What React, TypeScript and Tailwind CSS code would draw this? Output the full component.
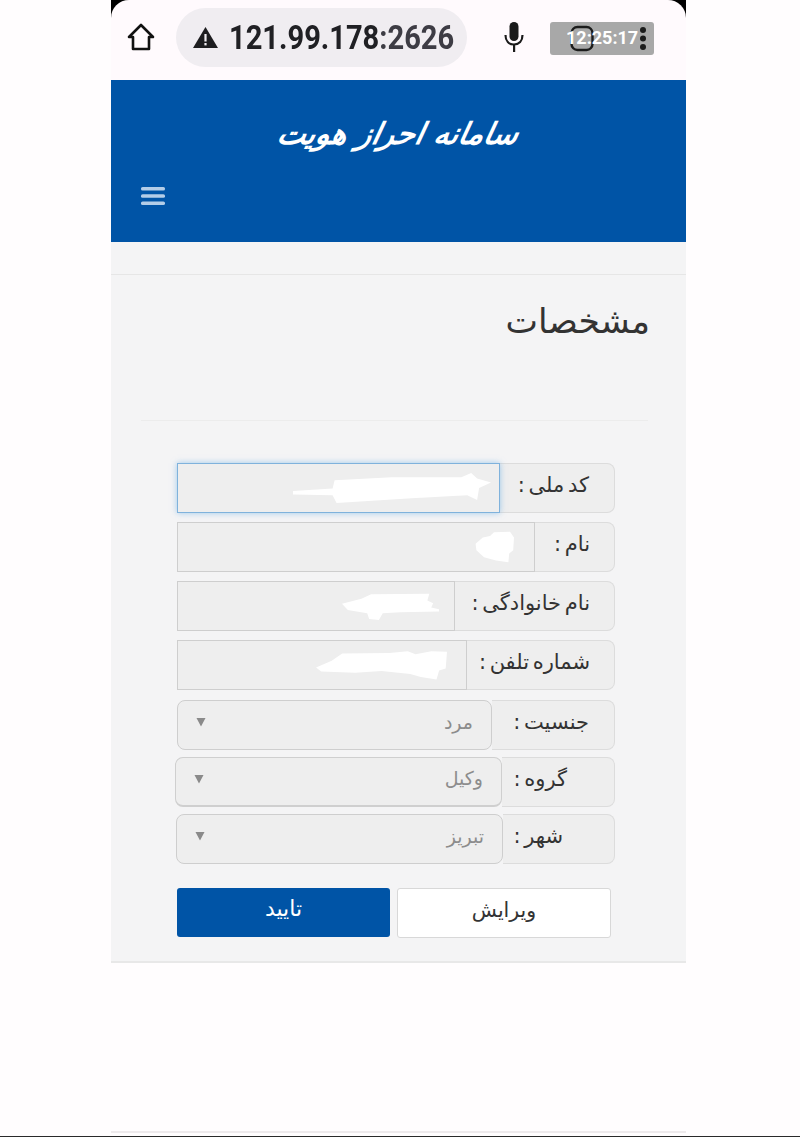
const dejavu = "font-['DejaVu_Sans',sans-serif]";

function Scribble({ d, className }: { d: string; className: string }) {
  return (
    <svg className={`blur-[0.6px] ${className}`} viewBox="0 0 100 100" preserveAspectRatio="none" aria-hidden="true">
      <path d={d} fill="#ffffff" />
    </svg>
  );
}

function Row({
  label,
  labelClass,
  fieldClass,
  outerClass,
  focused,
  children,
}: {
  label: string;
  labelClass: string;
  fieldClass: string;
  outerClass: string;
  focused?: boolean;
  children?: React.ReactNode;
}) {
  return (
    <div className={`flex h-[50px] ${outerClass}`}>
      <div
        className={`relative z-10 flex items-center border ${fieldClass} ${
          focused
            ? "border-[#7fb2dc] shadow-[0_0_6px_rgba(100,170,230,0.6)]"
            : "border-[#cecece]"
        } bg-[#eeeeee]`}
      >
        {children}
      </div>
      <div
        dir="rtl"
        className={`flex items-center rounded-r-[8px] border border-l-0 border-[#dcdcdc] bg-[#eeeeee] pb-[4px] text-[21px] text-[#333333] [word-spacing:-3px] ${dejavu} ${labelClass}`}
      >
        {label}
      </div>
    </div>
  );
}

function SelectInner({ value }: { value: string }) {
  return (
    <div className="flex w-full items-center justify-between pb-[6px]">
      <svg className="h-[10px] w-[10px]" viewBox="0 0 10 10" aria-hidden="true">
        <path d="M0.5 1 H9.5 L5 9.5 Z" fill="#8a8a8a" />
      </svg>
      <span dir="rtl" className={`text-[19px] text-[#8c8c8c] ${dejavu}`}>
        {value}
      </span>
    </div>
  );
}

export default function App() {
  return (
    <div className="flex h-[1137px] w-[800px] flex-col bg-[#fffdfe]">
      <div className="mx-[111px] flex w-[575px] flex-1 flex-col bg-[#fffdfe]">
        <div className="bg-black">
          <header className="flex h-[80px] items-center rounded-t-[18px] bg-[#fffafd] pb-[6px]">
            <svg className="ml-[15px] h-[30px] w-[30px] shrink-0" viewBox="0 0 30 30" fill="none" stroke="#111111" strokeWidth="2.6" strokeLinejoin="round" aria-hidden="true">
              <path d="M15 3 L27 15 H23 V27 H7 V15 H3 Z" />
            </svg>
            <div className="ml-[20px] flex h-[59px] w-[291px] shrink-0 items-center rounded-full bg-[#f0edf1] pl-[16px]">
              <svg className="h-[23px] w-[27px] shrink-0" viewBox="0 0 27 23" aria-hidden="true">
                <path d="M13.5 1 L26 22 H1 Z" fill="#1d1d1f" />
                <rect x="12.4" y="8" width="2.2" height="7.5" fill="#f0edf1" />
                <rect x="12.4" y="17" width="2.2" height="2.4" fill="#f0edf1" />
              </svg>
              <span className="ml-[10px] origin-left scale-x-[0.855] whitespace-nowrap font-['Roboto',sans-serif] text-[34px] font-bold text-[#202024]">
                121.99.178<span className="text-[#3d3c44]">:2626</span>
              </span>
            </div>
            <svg className="ml-[35px] h-[32px] w-[24px] shrink-0" viewBox="0 0 24 32" aria-hidden="true">
              <rect x="7.5" y="1" width="9" height="19" rx="4.5" fill="#1a1a1a" />
              <path d="M3.5 14 C3.5 20 7 23.5 12 23.5 C17 23.5 20.5 20 20.5 14" fill="none" stroke="#1a1a1a" strokeWidth="2.2" />
              <rect x="11" y="23" width="2.2" height="8" fill="#1a1a1a" />
            </svg>
            <div className="relative ml-[24px] mt-[2px] flex h-[33px] w-[104px] shrink-0 items-center rounded-[3px] bg-[#a8a8a8]">
              <svg className="absolute left-[20px] top-[3px] h-[27px] w-[24px]" viewBox="0 0 24 27" fill="none" aria-hidden="true">
                <rect x="1.5" y="2" width="21" height="23" rx="6" stroke="#1c1c1c" strokeWidth="2.4" />
              </svg>
              <span className="relative ml-[16px] font-['Roboto',sans-serif] text-[18px] font-bold leading-none text-white">
                12:25:17
              </span>
              <svg className="absolute left-[89px] top-[4px] h-[26px] w-[8px]" viewBox="0 0 8 26" aria-hidden="true">
                <circle cx="4" cy="4" r="3" fill="#1c1c1c" />
                <circle cx="4" cy="12.5" r="3" fill="#1c1c1c" />
                <circle cx="4" cy="21" r="3" fill="#1c1c1c" />
              </svg>
            </div>
          </header>
        </div>

        <div className="flex h-[162px] flex-col bg-[#0054a6]">
          <div dir="rtl" className={`mt-[26px] self-center whitespace-nowrap text-[30px] font-bold italic leading-[56px] text-white ${dejavu} -skew-x-12`}>
            سامانه احراز هویت
          </div>
          <svg className="ml-[30px] mt-[24px] h-[20px] w-[24px]" viewBox="0 0 24 20" aria-hidden="true">
            <rect x="0" y="1" width="24" height="3.6" rx="1.6" fill="#b3cde8" />
            <rect x="0" y="8.2" width="24" height="3.6" rx="1.6" fill="#b3cde8" />
            <rect x="0" y="15.4" width="24" height="3.6" rx="1.6" fill="#b3cde8" />
          </svg>
        </div>

        <main className="h-[721px] border-b-2 border-[#e8e8e8] bg-[#f4f4f5]">
          <div className="mt-[32px] h-px bg-[#e6e6e6]" />
          <h1 dir="rtl" className={`mr-[36px] mt-[22px] text-[34.5px] font-normal leading-[48px] text-[#333333] ${dejavu}`}>
            مشخصات
          </h1>
          <div className="ml-[30px] mr-[38px] mt-[75px] h-px bg-[#ececec]" />

          <Row
            outerClass="ml-[66px] mr-[71px] mt-[42px]"
            fieldClass="w-[323px]"
            labelClass="flex-1 pr-[25px]"
            label="کد ملی :"
            focused
          >
            <Scribble className="ml-[115px] h-[30px] w-[198px]" d="M0 60 L20 52 L21 24 L50 14 L85 14 L90 0 L93 18 L100 32 L94 50 L93 90 L88 74 L60 84 L22 100 L20 74 L0 72 Z" />
          </Row>
          <Row
            outerClass="ml-[66px] mr-[71px] mt-[9px]"
            fieldClass="w-[358px]"
            labelClass="flex-1 pr-[24px]"
            label="نام :"
          >
            <Scribble className="ml-[296px] h-[32px] w-[40px]" d="M4 40 L22 20 L40 16 L50 4 L90 2 L100 20 L98 60 L88 70 L86 98 L55 92 L25 82 L6 60 Z" />
          </Row>
          <Row
            outerClass="ml-[66px] mr-[71px] mt-[9px]"
            fieldClass="w-[278px]"
            labelClass="flex-1 pr-[24px]"
            label="نام خانوادگی :"
          >
            <Scribble className="ml-[164px] h-[28px] w-[97px]" d="M0 42 L20 24 L30 8 L90 6 L88 30 L94 40 L92 55 L100 62 L100 70 L60 72 L42 76 L38 100 L28 96 L26 76 L6 64 Z" />
          </Row>
          <Row
            outerClass="ml-[66px] mr-[71px] mt-[9px]"
            fieldClass="w-[290px]"
            labelClass="flex-1 pr-[24px]"
            label="شماره تلفن :"
          >
            <Scribble className="ml-[138px] h-[30px] w-[131px]" d="M0 58 L12 36 L20 12 L56 10 L70 4 L76 14 L88 4 L100 6 L99 62 L94 68 L92 98 L80 90 L72 80 L50 70 L30 76 L4 72 Z" />
          </Row>

          <Row
            outerClass="ml-[66px] mr-[71px] mt-[10px]"
            fieldClass="w-[315px] rounded-[8px] px-[18px]"
            labelClass="flex-1 pr-[25px]"
            label="جنسیت :"
          >
            <SelectInner value="مرد" />
          </Row>
          <Row
            outerClass="ml-[64px] mr-[71px] mt-[7px]"
            fieldClass="w-[327px] rounded-[8px] border-b-2 px-[18px] !border-[#cfcfcf]"
            labelClass="flex-1 pr-[47px]"
            label="گروه :"
          >
            <SelectInner value="وکیل" />
          </Row>
          <Row
            outerClass="ml-[65px] mr-[71px] mt-[7px]"
            fieldClass="w-[327px] rounded-[8px] px-[18px]"
            labelClass="flex-1 pr-[51px]"
            label="شهر :"
          >
            <SelectInner value="تبریز" />
          </Row>

          <div className="ml-[66px] mt-[24px] flex h-[50px] gap-[7px]">
            <button className={`h-[49px] w-[213px] rounded-[3px] bg-[#0054a6] pb-[9px] text-[22px] text-white ${dejavu}`}>
              تایید
            </button>
            <button className={`h-[50px] w-[214px] rounded-[3px] border border-[#d8d8d8] bg-white pb-[5px] text-[20.5px] text-[#333333] ${dejavu}`}>
              ویرایش
            </button>
          </div>
        </main>

        <div className="mt-auto mb-[3px] h-[2px] bg-[#eeeaec]" />
      </div>
      <div className="h-[1px] bg-[#2a2a2a]" />
    </div>
  );
}
